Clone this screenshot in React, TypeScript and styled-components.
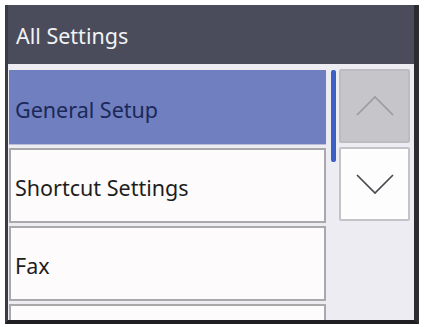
import React from "react";
import styled, { createGlobalStyle } from "styled-components";

const Global = createGlobalStyle`
  html, body { margin: 0; padding: 0; background: #ffffff; }
  body { font-family: "Noto Sans", "Open Sans", sans-serif; }
`;

const Screen = styled.div`
  margin: 5px 0 0 5px;
  width: 414px;
  height: 319px;
  box-sizing: border-box;
  border-left: 3px solid #3a3b44;
  border-right: 5px solid #2c2c31;
  border-bottom: 4px solid #1f1f22;
  display: flex;
  flex-direction: column;
  overflow: hidden;
`;

const Header = styled.div`
  height: 59px;
  flex: none;
  background: #4a4c5b;
  display: flex;
  align-items: center;
  padding-left: 8px;
  padding-top: 1px;
  box-sizing: border-box;
  color: #f2f2f4;
  font-size: 21.5px;
`;

const Body = styled.div`
  flex: 1;
  background: #ececf2;
  display: flex;
  padding: 6px 4px 0 1px;
  min-height: 0;
`;

const List = styled.div`
  width: 317px;
  display: flex;
  flex-direction: column;
  gap: 3px;
  flex: none;
`;

const Row = styled.div<{ $active?: boolean }>`
  height: 75px;
  flex: none;
  box-sizing: border-box;
  display: flex;
  align-items: center;
  padding-left: ${(p) => (p.$active ? "6px" : "4px")};
  padding-top: 4px;
  font-size: 21.5px;
  background: ${(p) => (p.$active ? "#6f7fbf" : "#fdfbfc")};
  color: ${(p) => (p.$active ? "#1c2858" : "#1e1e20")};
  border: ${(p) => (p.$active ? "none" : "2px solid #a9a9ab")};
  border-bottom: ${(p) => (p.$active ? "1px solid #b9bfd8" : "2px solid #a9a9ab")};
`;

const Track = styled.div`
  width: 12px;
  flex: none;
  display: flex;
  justify-content: center;
  padding-left: 1px;
`;

const Thumb = styled.div`
  width: 5px;
  height: 92px;
  border-radius: 2px;
  background: #3c5fc4;
`;

const Buttons = styled.div`
  flex: 1;
  display: flex;
  flex-direction: column;
  gap: 4px;
  margin-top: -1px;
`;

const ArrowButton = styled.div<{ $disabled?: boolean }>`
  height: 74px;
  box-sizing: border-box;
  display: flex;
  align-items: center;
  justify-content: center;
  background: ${(p) => (p.$disabled ? "#c6c5ca" : "#fdfdfd")};
  border: 2px solid ${(p) => (p.$disabled ? "#bdbcc1" : "#c4c4c8")};
  border-radius: 2px;
`;

const Chevron = ({ up, color }: { up?: boolean; color: string }) => (
  <svg width="38" height="22" viewBox="0 0 38 22">
    <polyline
      points={up ? "1,20 19,2 37,20" : "1,2 19,20 37,2"}
      fill="none"
      stroke={color}
      strokeWidth="1.7"
    />
  </svg>
);

export default function App() {
  return (
    <>
      <Global />
      <Screen>
        <Header>All Settings</Header>
        <Body>
          <List>
            <Row $active>General Setup</Row>
            <Row>Shortcut Settings</Row>
            <Row>Fax</Row>
            <Row />
          </List>
          <Track>
            <Thumb />
          </Track>
          <Buttons>
            <ArrowButton $disabled>
              <Chevron up color="#9c9ba0" />
            </ArrowButton>
            <ArrowButton>
              <Chevron color="#4a4a4e" />
            </ArrowButton>
          </Buttons>
        </Body>
      </Screen>
    </>
  );
}
